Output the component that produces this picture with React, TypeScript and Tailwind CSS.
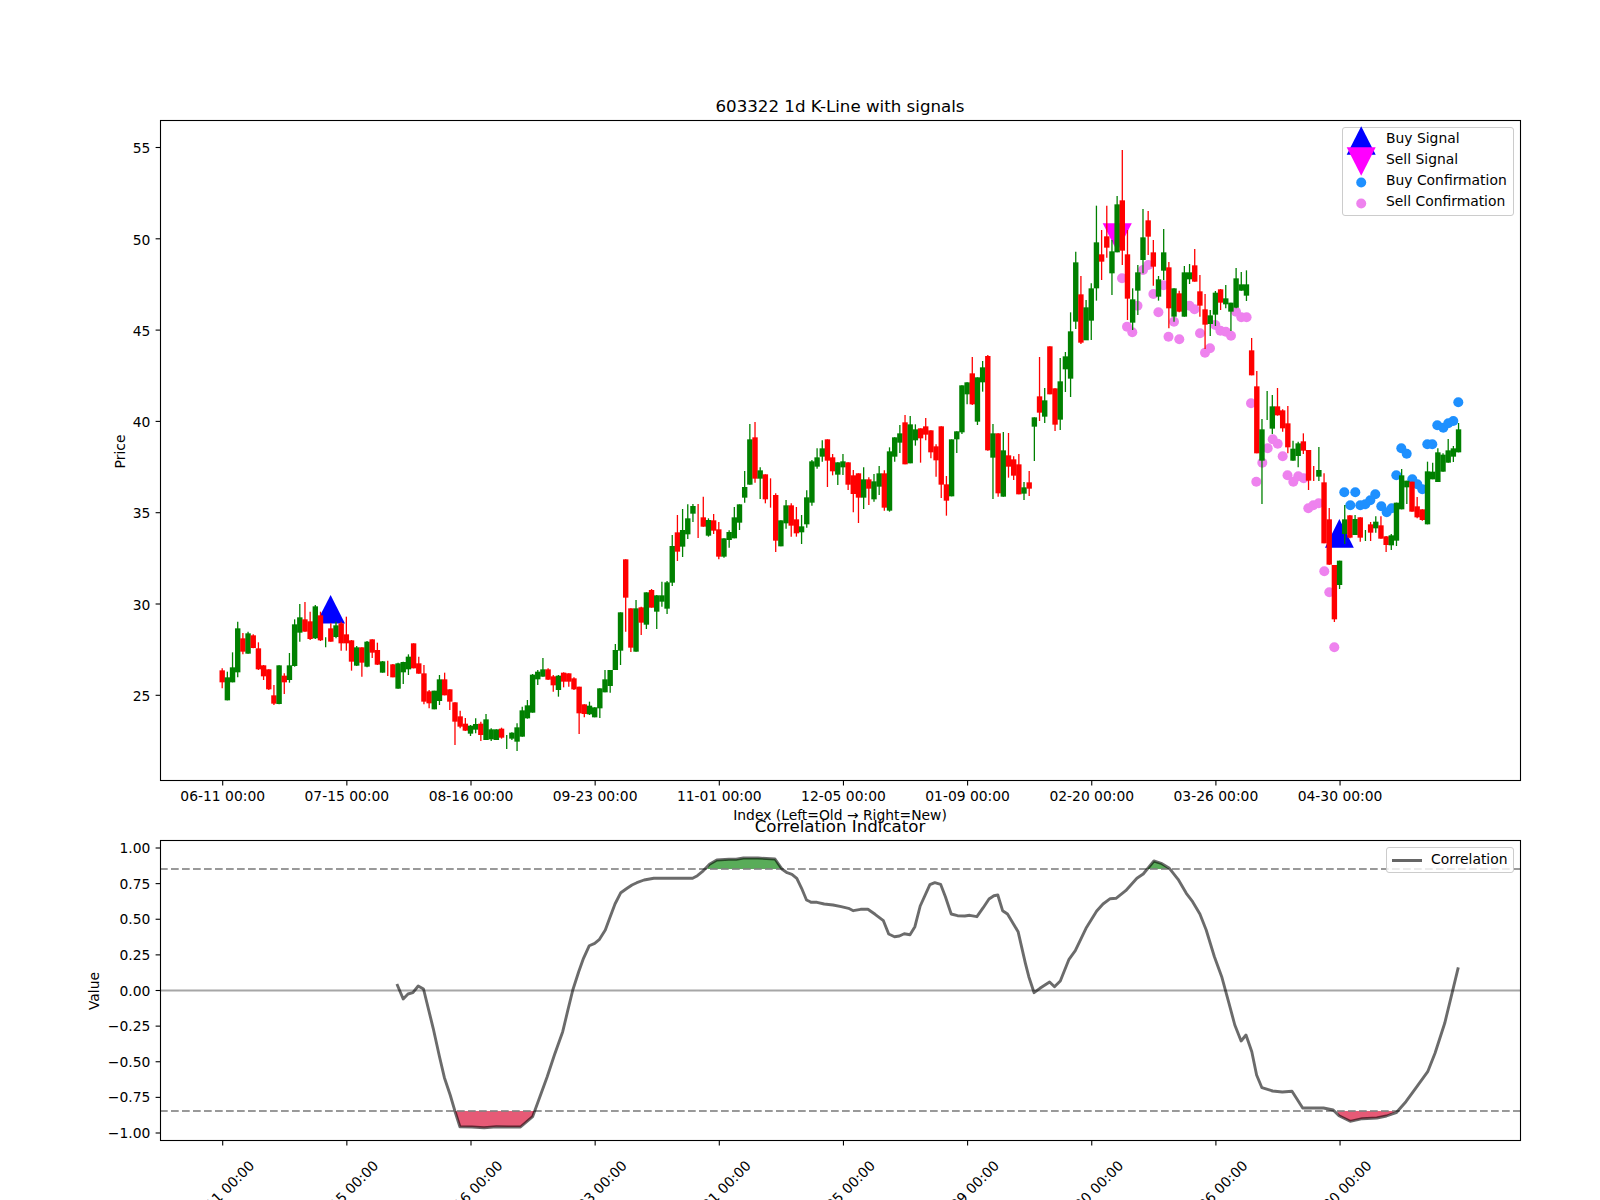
type Row = [string, number, number, number, number];

// rows are colour, wick top, body top, body bottom, wick bottom, read at 3x from baseY
const seg = (baseY: number, rows: Row[]) =>
  rows.map(([color, hi, top, bot, lo]) => ({
    color: color === 'r' ? '#ff0000' : '#008000',
    hi: baseY + hi / 3,
    top: baseY + top / 3,
    bot: baseY + bot / 3,
    lo: baseY + lo / 3,
  }));

const candles = [
  ...seg(560, [
    ['r', 325, 331, 367, 385], ['g', 335, 352, 421, 421], ['g', 277, 322, 367, 367], ['g', 185, 205, 337, 352],
    ['r', 219, 235, 275, 283], ['g', 215, 220, 281, 281], ['r', 223, 226, 264, 265], ['r', 247, 265, 328, 330],
    ['r', 315, 316, 349, 360], ['r', 328, 328, 388, 390], ['r', 375, 406, 431, 435], ['g', 316, 316, 432, 433],
    ['r', 340, 347, 367, 402], ['g', 279, 316, 360, 368], ['g', 178, 193, 318, 320], ['g', 132, 172, 218, 245],
    ['r', 126, 178, 215, 215], ['r', 155, 184, 237, 240], ['g', 135, 139, 235, 237], ['r', 155, 166, 241, 243],
    ['g', 232, 232, 232, 262], ['r', 190, 205, 245, 245], ['g', 185, 196, 231, 235], ['r', 185, 190, 250, 272],
    ['r', 170, 223, 250, 272], ['r', 240, 241, 305, 332], ['g', 258, 262, 317, 318], ['r', 262, 262, 308, 350],
    ['g', 243, 245, 320, 322], ['r', 238, 238, 278, 294], ['r', 248, 270, 314, 315], ['g', 303, 304, 338, 338],
    ['r', 302, 302, 302, 348], ['r', 312, 313, 352, 352], ['g', 308, 310, 386, 386], ['g', 305, 306, 337, 372],
    ['g', 283, 290, 328, 345], ['r', 250, 250, 325, 325], ['r', 290, 310, 341, 341], ['r', 315, 340, 425, 433],
    ['r', 390, 394, 430, 445], ['g', 392, 392, 448, 448], ['g', 345, 358, 423, 435], ['r', 338, 358, 406, 406],
    ['r', 388, 388, 425, 450], ['r', 427, 427, 485, 555], ['r', 452, 469, 500, 505], ['r', 474, 491, 512, 513],
    ['g', 495, 497, 521, 528], ['g', 475, 492, 509, 520], ['r', 485, 491, 525, 543], ['g', 462, 478, 540, 540],
    ['g', 505, 508, 538, 543], ['g', 508, 508, 540, 540], ['r', 503, 506, 533, 536], ['g', 525, 525, 525, 567],
    ['g', 517, 518, 536, 540], ['g', 490, 502, 545, 573], ['g', 440, 451, 530, 530], ['g', 420, 436, 475, 476],
    ['g', 342, 344, 458, 458], ['g', 330, 335, 358, 375], ['g', 294, 328, 350, 350], ['r', 325, 328, 359, 360],
    ['r', 345, 349, 376, 395], ['g', 345, 347, 390, 410], ['r', 337, 338, 365, 382], ['r', 340, 340, 365, 380],
    ['r', 352, 355, 388, 390], ['r', 380, 380, 460, 522],
  ]),
  ...seg(640, [
    ['r', 193, 193, 222, 232], ['g', 185, 197, 223, 225], ['g', 202, 202, 232, 232], ['g', 145, 145, 205, 234],
    ['g', 90, 118, 157, 157], ['g', 90, 90, 138, 158], ['g', 12, 30, 90, 90],
  ]),
  ...seg(500, [
    ['g', 337, 337, 452, 495], ['r', 178, 178, 293, 395], ['r', 325, 325, 443, 456], ['g', 300, 325, 455, 455],
    ['r', 320, 322, 368, 405], ['g', 277, 277, 374, 387], ['r', 267, 270, 323, 323], ['g', 285, 286, 335, 387],
    ['g', 245, 286, 305, 320], ['g', 243, 247, 326, 342], ['g', 105, 138, 248, 258], ['r', 45, 97, 155, 183],
    ['g', 27, 90, 140, 171], ['g', 13, 55, 103, 117],
  ]),
  ...seg(360, [
    ['g', 432, 438, 461, 486], ['r', 432, 432, 432, 534], ['r', 410, 472, 500, 500], ['g', 475, 480, 527, 530],
    ['r', 462, 481, 512, 522], ['r', 486, 508, 590, 598], ['g', 535, 535, 590, 593], ['g', 511, 516, 540, 563],
    ['g', 441, 472, 535, 535], ['g', 433, 433, 488, 510], ['g', 333, 381, 413, 428], ['g', 192, 238, 374, 374],
    ['r', 186, 232, 356, 368], ['g', 322, 331, 356, 417], ['r', 343, 343, 418, 430], ['r', 355, 355, 355, 443],
    ['r', 400, 405, 542, 576], ['g', 481, 481, 559, 559], ['g', 420, 436, 490, 506], ['r', 430, 436, 497, 530],
    ['r', 441, 478, 520, 530], ['g', 465, 499, 517, 552], ['g', 391, 412, 493, 503], ['g', 300, 304, 428, 437],
    ['g', 265, 292, 320, 326], ['g', 241, 265, 290, 305], ['r', 238, 238, 302, 381], ['r', 282, 292, 334, 346],
    ['g', 307, 307, 344, 375], ['g', 282, 304, 322, 345], ['r', 307, 307, 374, 390], ['r', 330, 346, 402, 457],
    ['r', 340, 340, 413, 489], ['g', 322, 358, 413, 447], ['r', 352, 358, 386, 435], ['g', 342, 364, 418, 425],
    ['g', 318, 340, 380, 405], ['r', 331, 340, 443, 452], ['g', 262, 274, 452, 455], ['g', 232, 232, 290, 305],
    ['g', 195, 220, 248, 279], ['r', 165, 187, 313, 313], ['g', 168, 193, 310, 310], ['g', 193, 208, 241, 257],
    ['r', 205, 205, 235, 308], ['r', 174, 199, 224, 241], ['r', 211, 211, 277, 295], ['r', 253, 259, 301, 350],
    ['r', 199, 199, 374, 414], ['r', 348, 373, 422, 467], ['g', 238, 238, 409, 409], ['g', 214, 214, 238, 279],
    ['g', 76, 76, 217, 222], ['g', 67, 67, 103, 133],
  ]),
  ...seg(280, [
    ['r', 231, 280, 373, 375], ['g', 292, 292, 425, 435], ['g', 243, 262, 307, 335], ['r', 225, 228, 511, 512],
    ['g', 432, 460, 533, 657], ['r', 460, 460, 640, 650], ['g', 456, 511, 650, 650], ['r', 459, 526, 560, 593],
    ['r', 529, 538, 587, 600], ['r', 522, 553, 643, 643], ['g', 606, 622, 641, 660], ['r', 573, 607, 626, 648],
    ['g', 412, 412, 440, 543], ['r', 231, 349, 398, 423], ['g', 324, 361, 410, 429], ['r', 199, 199, 343, 343],
    ['r', 325, 325, 434, 453], ['g', 234, 304, 419, 450], ['g', 216, 229, 268, 336], ['g', 97, 154, 296, 351],
  ]),
  ...seg(140, [
    ['g', 335, 367, 545, 567], ['r', 408, 463, 608, 612], ['g', 480, 502, 601, 600], ['g', 430, 445, 542, 600],
    ['g', 197, 307, 445, 482], ['r', 270, 343, 365, 420], ['r', 197, 289, 323, 353], ['g', 300, 334, 400, 465],
    ['g', 168, 193, 337, 337], ['r', 30, 181, 332, 375], ['r', 270, 343, 476, 540], ['g', 445, 478, 548, 570],
    ['g', 375, 397, 452, 525], ['g', 207, 292, 360, 400], ['r', 213, 241, 290, 345], ['r', 300, 337, 380, 437],
    ['g', 408, 418, 470, 482], ['g', 267, 337, 392, 420], ['r', 366, 382, 505, 565], ['g', 445, 445, 530, 545],
    ['r', 452, 460, 515, 517], ['g', 378, 397, 530, 530], ['g', 372, 397, 418, 432], ['r', 327, 376, 425, 425],
    ['r', 405, 454, 497, 530], ['r', 462, 508, 554, 627], ['g', 510, 526, 552, 588], ['g', 453, 458, 524, 558],
    ['r', 447, 448, 488, 510], ['g', 435, 475, 493, 505], ['g', 488, 488, 515, 573], ['g', 384, 415, 503, 505],
    ['g', 396, 433, 452, 452], ['g', 391, 433, 467, 483],
  ]),
  ...seg(350, [
    ['r', -36, 1, 76, 76], ['r', 63, 109, 310, 310], ['g', 207, 238, 332, 462], ['g', 123, 123, 123, 210],
    ['g', 135, 169, 236, 252], ['r', 114, 169, 196, 197], ['r', 178, 181, 235, 245], ['r', 168, 220, 292, 310],
    ['g', 272, 296, 332, 332], ['g', 275, 280, 318, 352], ['r', 250, 274, 302, 312], ['r', 300, 300, 392, 420],
    ['r', 348, 348, 348, 393], ['g', 291, 360, 380, 393], ['r', 370, 397, 580, 580], ['r', 474, 508, 644, 645],
    ['r', 645, 645, 808, 816], ['g', 632, 632, 705, 717], ['g', 465, 508, 552, 582], ['r', 495, 496, 563, 565],
    ['g', 495, 507, 555, 555], ['r', 502, 502, 563, 575], ['g', 540, 540, 540, 573], ['r', 516, 523, 548, 573],
    ['g', 499, 515, 535, 548], ['r', 499, 526, 566, 566], ['r', 558, 559, 585, 606], ['g', 552, 556, 586, 600],
    ['g', 458, 458, 572, 588], ['g', 357, 376, 478, 478], ['g', 392, 392, 412, 462], ['r', 395, 395, 485, 485],
    ['r', 441, 469, 502, 505], ['r', 478, 478, 510, 512], ['g', 335, 364, 523, 523], ['g', 338, 365, 388, 388],
    ['g', 295, 307, 396, 396], ['g', 310, 314, 365, 365], ['g', 267, 301, 338, 338], ['g', 288, 295, 320, 336],
    ['g', 219, 238, 307, 307],
  ]),
];

const candleX = (i: number) => 222.2 + 5.173 * i;
const tickX = (i: number) => 222.7 + 124.15 * i;

const sellDots = [
  [1122, 278.3], [1127, 326.7], [1132.3, 332.3], [1137.5, 305.7], [1143, 270], [1148.3, 265], [1153.4, 294], [1158.4, 312.3],
  [1163.5, 285.3], [1168.5, 336.7], [1174, 321.7], [1179.3, 339.3], [1189.5, 305.7], [1194.5, 309.3], [1200, 333.3],
  [1205, 352.7], [1210, 348.3], [1215.3, 325], [1220.4, 330.7], [1225.8, 331.7], [1231, 335.7], [1236, 311.7],
  [1241.3, 317.3], [1246.6, 317.3], [1251, 403.3], [1256.3, 481.7], [1262.3, 462.7], [1267.7, 448.3], [1272.7, 439.3],
  [1277.7, 443.7], [1282.7, 456.3], [1287.5, 475.3], [1293.3, 481.7], [1298.3, 476.3], [1303.7, 478.3], [1308.3, 508.3],
  [1313.3, 505.3], [1318.7, 503.3], [1324.3, 571.3], [1329.3, 592.3], [1334.3, 647.3],
];

const buyDots = [
  [1344.3, 492.3], [1350.3, 505.3], [1355.3, 492.3], [1360.3, 505.3], [1365.3, 504.3], [1370.3, 500.3], [1375.3, 494.3],
  [1381.3, 506.3], [1386.7, 512.3], [1391.7, 508.3], [1396.3, 475.3], [1401.3, 448.3], [1406.7, 453.7], [1412.3, 479.3],
  [1417.3, 484.3], [1422.3, 489.3], [1427.3, 444.3], [1432.3, 444.3], [1437.3, 425.3], [1443.3, 427.7], [1448.3, 423.3],
  [1453.3, 421], [1458.3, 402.3],
];

const left = (p: number[][]) => p.map(([x, y]) => [60 + x / 2.063, 780 + y / 3]);
const right = (p: number[][]) => p.map(([x, y]) => [800 + x / 2.063, 780 + y / 3]);

const correlation = [
  ...left([
    [695, 612], [708, 657], [718, 642], [728, 638], [739, 618], [750, 627], [770, 745], [783, 830], [793, 893], [805, 945],
    [815, 995], [825, 1040], [850, 1041], [875, 1043], [900, 1040], [925, 1041], [950, 1041], [975, 1010], [990, 950],
    [1005, 890], [1020, 825], [1037, 755], [1047, 695], [1058, 630], [1070, 575], [1080, 535], [1092, 497], [1103, 490],
    [1113, 478], [1125, 450], [1135, 410], [1145, 372], [1157, 338], [1170, 325], [1180, 315], [1190, 308], [1205, 300],
    [1225, 295], [1250, 295], [1280, 295], [1305, 295], [1315, 287], [1325, 275], [1340, 253], [1355, 240], [1380, 238],
    [1395, 238], [1410, 234], [1440, 234], [1475, 237], [1490, 268], [1500, 278], [1510, 283], [1520, 295], [1530, 325],
    [1540, 360], [1550, 367],
  ]),
  ...right([
    [22, 367], [35, 367], [50, 372], [68, 375], [85, 380], [100, 385], [110, 392], [125, 388], [140, 388], [155, 403],
    [172, 422], [183, 462], [195, 470], [205, 468], [215, 461], [227, 464], [237, 440], [248, 378], [268, 314], [278, 308],
    [290, 313], [300, 350], [312, 402], [325, 407], [340, 408], [350, 406], [365, 410], [378, 383], [390, 357], [400, 347],
    [408, 345], [418, 392], [428, 402], [450, 455], [465, 550], [472, 590], [483, 638], [495, 625], [515, 606], [525, 620],
    [537, 603], [555, 538], [568, 512], [590, 445], [612, 393], [625, 372], [640, 356], [652, 355], [672, 332], [695, 295],
    [708, 282], [730, 243], [745, 250], [762, 265], [780, 298], [797, 340], [810, 365], [825, 402], [838, 450], [855, 530],
    [870, 590], [885, 670], [897, 735], [910, 783], [920, 765], [932, 815], [942, 885], [953, 923], [975, 933], [995, 936],
    [1015, 934], [1037, 984], [1060, 984], [1080, 984], [1100, 990], [1112, 1007], [1135, 1024], [1160, 1016], [1190, 1014],
    [1210, 1008], [1230, 998], [1250, 965], [1270, 925], [1295, 875], [1310, 820], [1330, 730], [1345, 640], [1358, 562],
  ]),
];

const points = (p: number[][]) => p.map(([x, y]) => `${x.toFixed(1)},${y.toFixed(1)}`).join(' ');

const fills = [
  {
    color: '#dc143c',
    opacity: 0.7,
    pts: left([[815, 993], [825, 1040], [850, 1041], [875, 1043], [900, 1040], [925, 1041], [950, 1041], [975, 1010], [979, 993]]),
  },
  {
    color: '#dc143c',
    opacity: 0.7,
    pts: right([[1108, 993], [1112, 1007], [1135, 1024], [1160, 1016], [1190, 1014], [1210, 1008], [1232, 993]]),
  },
  {
    color: '#008000',
    opacity: 0.65,
    pts: left([[1335, 267], [1340, 253], [1355, 240], [1380, 238], [1395, 238], [1410, 234], [1440, 234], [1475, 237], [1490, 267]]),
  },
  {
    color: '#008000',
    opacity: 0.65,
    pts: right([[716, 267], [730, 243], [745, 250], [762, 267]]),
  },
];

const dateTicks = [
  '06-11 00:00', '07-15 00:00', '08-16 00:00', '09-23 00:00', '11-01 00:00',
  '12-05 00:00', '01-09 00:00', '02-20 00:00', '03-26 00:00', '04-30 00:00',
];

const priceY = (p: number) => 695.3 - (p - 25) * 18.26;
const corrY = (v: number) => 990.5 - 142.5 * v;

function YTick({ y, label, dy = 5 }: { y: number; label: string; dy?: number }) {
  return (
    <g>
      <line x1={155.6} x2={160.5} y1={y} y2={y} stroke="#000" strokeWidth={1.1} />
      <text x={150.4} y={y + dy} textAnchor="end" className="text-[13.89px]">{label}</text>
    </g>
  );
}

function PriceChart() {
  return (
    <svg viewBox="0 0 1600 800" className="w-[1600px] h-[800px] overflow-visible">
      <text x={840} y={111.5} textAnchor="middle" className="text-[16.67px]">603322 1d K-Line with signals</text>

      {sellDots.map(([x, y], i) => <circle key={i} cx={x} cy={y} r={5} fill="#ee82ee" />)}
      {buyDots.map(([x, y], i) => <circle key={i} cx={x} cy={y} r={5} fill="#1e90ff" />)}
      <polygon points="330.6,595 316,623.4 345,623.4" fill="#0000ff" />
      <polygon points="1339.4,519 1325,547.7 1353.8,547.7" fill="#0000ff" />
      <polygon points="1117.3,251.7 1102.7,223.3 1131.8,223.3" fill="#ff00ff" />

      {candles.map((c, i) => {
        const x = candleX(i);
        return (
          <g key={i} fill={c.color} stroke={c.color}>
            <line x1={x} x2={x} y1={c.hi} y2={c.lo} strokeWidth={1.3} />
            {c.bot > c.top && <rect x={x - 2.7} y={c.top} width={5.4} height={c.bot - c.top} stroke="none" />}
          </g>
        );
      })}

      <rect x={160.5} y={120.5} width={1360} height={660} fill="none" stroke="#000" strokeWidth={1.1} />
      {[55, 50, 45, 40, 35, 30, 25].map((p) => <YTick key={p} y={priceY(p)} label={String(p)} dy={5.7} />)}
      {dateTicks.map((label, i) => {
        const x = tickX(i);
        return (
          <g key={label}>
            <line x1={x} x2={x} y1={780.5} y2={785.4} stroke="#000" strokeWidth={1.1} />
            <text x={x} y={800.5} textAnchor="middle" className="text-[13.89px]">{label}</text>
          </g>
        );
      })}
      <text transform="translate(125 451.5) rotate(-90)" textAnchor="middle" className="text-[13.89px]">Price</text>
      <text x={840} y={820} textAnchor="middle" className="text-[13.89px]">Index (Left=Old → Right=New)</text>
    </svg>
  );
}

function CorrelationChart() {
  return (
    <svg viewBox="0 800 1600 400" className="w-[1600px] h-[400px] overflow-visible">
      <text x={840} y={831.5} textAnchor="middle" className="text-[16.67px]">Correlation Indicator</text>

      <line x1={160} x2={1520} y1={corrY(0)} y2={corrY(0)} stroke="#808080" strokeOpacity={0.7} strokeWidth={2.08} />
      {fills.map((f, i) => <polygon key={i} points={points(f.pts)} fill={f.color} fillOpacity={f.opacity} />)}
      {[869, 1111].map((y) => (
        <line key={y} x1={160} x2={1520} y1={y} y2={y} stroke="#808080" strokeOpacity={0.8} strokeWidth={2.08} strokeDasharray="7.7 3.3" />
      ))}
      <polyline points={points(correlation)} fill="none" stroke="#000" strokeOpacity={0.58} strokeWidth={2.9} strokeLinejoin="round" />

      <rect x={160.5} y={840.5} width={1360} height={300} fill="none" stroke="#000" strokeWidth={1.1} />
      {[1, 0.75, 0.5, 0.25, 0, -0.25, -0.5, -0.75, -1].map((v) => (
        <YTick key={v} y={corrY(v)} label={(v < 0 ? '\u2212' : '') + Math.abs(v).toFixed(2)} />
      ))}
      {dateTicks.map((label, i) => {
        const x = tickX(i);
        return (
          <g key={label}>
            <line x1={x} x2={x} y1={1140.5} y2={1145.4} stroke="#000" strokeWidth={1.1} />
            <text transform={`translate(${x - 1} 1193) rotate(-45)`} y={5} textAnchor="middle" className="text-[13.89px]">{label}</text>
          </g>
        );
      })}
      <text transform="translate(99 991) rotate(-90)" textAnchor="middle" className="text-[13.89px]">Value</text>
    </svg>
  );
}

function LegendRow({ label, children }: { label: string; children: React.ReactNode }) {
  return (
    <div className="flex items-center h-[21px]">
      <svg viewBox="0 0 43 21" className="w-[43px] h-[21px] shrink-0 overflow-visible">{children}</svg>
      <span>{label}</span>
    </div>
  );
}

function SignalLegend() {
  return (
    <div className="absolute left-[1342px] top-[127px] w-[172px] h-[89px] pt-[0.5px] rounded-[3px] border border-[#cccccc] bg-white/80 text-[13.89px] leading-none">
      <LegendRow label="Buy Signal"><polygon points="18.2,-2.8 3.7,25.8 32.7,25.8" fill="#0000ff" /></LegendRow>
      <LegendRow label="Sell Signal"><polygon points="18.2,25.8 3.7,-2.8 32.7,-2.8" fill="#ff00ff" /></LegendRow>
      <LegendRow label="Buy Confirmation"><circle cx={18.2} cy={11.5} r={5} fill="#1e90ff" /></LegendRow>
      <LegendRow label="Sell Confirmation"><circle cx={18.2} cy={11.5} r={5} fill="#ee82ee" /></LegendRow>
    </div>
  );
}

function CorrelationLegend() {
  return (
    <div className="absolute left-[1386px] top-[47px] w-[128px] h-[26px] rounded-[3px] border border-[#cccccc] bg-white/80 flex items-center pl-[5px] gap-[9px] text-[13.89px] leading-none">
      <div className="w-[30px] h-[3px] bg-[#666666]" />
      <span>Correlation</span>
    </div>
  );
}

export default function App() {
  return (
    <div className="w-[1600px] h-[1200px] overflow-hidden bg-white text-black flex flex-col font-['DejaVu_Sans',sans-serif]">
      <section className="relative h-[800px]">
        <PriceChart />
        <SignalLegend />
      </section>
      <section className="relative h-[400px]">
        <CorrelationChart />
        <CorrelationLegend />
      </section>
    </div>
  );
}
